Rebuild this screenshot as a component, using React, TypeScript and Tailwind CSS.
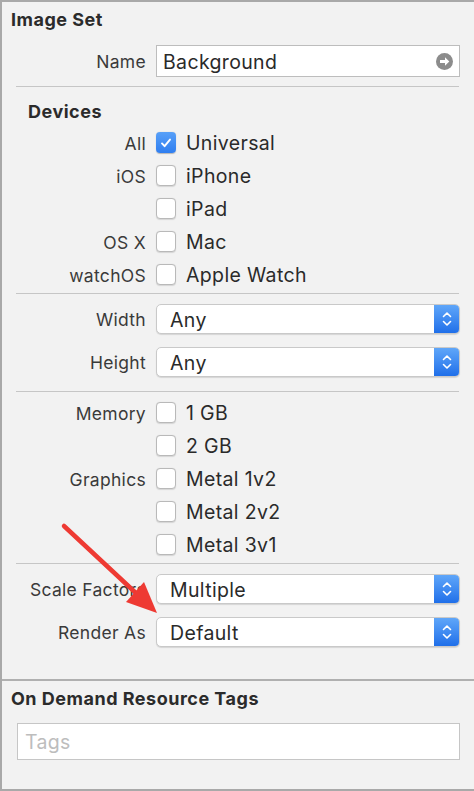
import React from 'react';

const font = "font-['Inter','Liberation_Sans',sans-serif]";

const Label = ({ children }: { children?: React.ReactNode }) => (
  <div className="w-[144px] shrink-0 pt-[3px] text-right text-[17.5px] tracking-[0.3px] text-[#3a3a3a]">{children}</div>
);

const Checkbox = ({ checked }: { checked?: boolean }) =>
  checked ? (
    <div className="flex h-[21px] w-[20px] shrink-0 items-center justify-center rounded-[4px] bg-gradient-to-b from-[#58a0f8] to-[#2f7ef0] shadow-[0_0.5px_1px_rgba(0,0,0,0.25)]">
      <svg className="h-[14px] w-[14px]" viewBox="0 0 14 14" fill="none">
        <path d="M3 7.4l2.6 2.8L11 3.6" stroke="white" strokeWidth={1.9} strokeLinecap="round" strokeLinejoin="round" />
      </svg>
    </div>
  ) : (
    <div className="h-[21px] w-[20px] shrink-0 rounded-[4px] border border-[#b9b9b9] bg-white shadow-[0_0.5px_1px_rgba(0,0,0,0.12)]" />
  );

const CheckRow = ({ label, text, checked }: { label?: string; text: string; checked?: boolean }) => (
  <div className="flex h-[33px] items-center">
    <Label>{label}</Label>
    <div className="ml-[10px] flex items-center gap-[10px]">
      <Checkbox checked={checked} />
      <span className="pt-[3px] text-[19.5px] tracking-[0.35px] text-[#2a2a2a]">{text}</span>
    </div>
  </div>
);

const Select = ({ label, value }: { label: string; value: string }) => (
  <div className="flex h-[30px] items-center">
    <Label>{label}</Label>
    <div className="ml-[10px] flex h-[30px] w-[304px] overflow-hidden rounded-[5px] border border-[#c9c9c9] bg-white shadow-[0_1px_1px_rgba(0,0,0,0.12)]">
      <div className="flex flex-1 items-center pl-[13px] pt-[3px] text-[19.5px] tracking-[0.35px] text-[#2a2a2a]">{value}</div>
      <div className="flex w-[25px] items-center justify-center bg-gradient-to-b from-[#5fa6f9] to-[#1f6fe9]">
        <svg className="h-[18px] w-[12px]" viewBox="0 0 12 18" fill="none">
          <path d="M2.5 6.5L6 3l3.5 3.5M2.5 11.5L6 15l3.5-3.5" stroke="white" strokeWidth={1.6} strokeLinecap="round" strokeLinejoin="round" />
        </svg>
      </div>
    </div>
  </div>
);

const Separator = () => <div className="ml-[14px] mr-[15px] h-px bg-[#c6c6c6]" />;

export default function App() {
  return (
    <div className={`relative h-[791px] w-[474px] overflow-hidden border-l-2 border-t-2 border-b-2 border-[#a9a9a9] bg-[#f2f2f2] ${font}`}>
      <div className="pt-[6px]">
        <div className="h-[22px] pl-[9px] pt-[1px] text-[18px] font-bold leading-[22px] tracking-[0.5px] text-[#2b2b2b]">Image Set</div>

        <div className="mt-[15px] flex h-[32px] items-center">
          <Label>Name</Label>
          <div className="ml-[10px] flex h-[32px] w-[304px] items-center border border-[#bdbdbd] bg-white pl-[6px] pr-[6px]">
            <span className="flex-1 pt-[3px] text-[19.5px] tracking-[0.35px] text-[#2a2a2a]">Background</span>
            <svg className="h-[17px] w-[17px]" viewBox="0 0 17 17">
              <circle cx="8.5" cy="8.5" r="8.5" fill="#8c8c8c" />
              <path d="M4 7h5V4.2l4.3 4.3L9 12.8V10H4z" fill="white" />
            </svg>
          </div>
        </div>

        <div className="mt-[9px]">
          <Separator />
        </div>

        <div className="mt-[13px] h-[22px] pl-[26px] pt-[1px] text-[18px] font-bold leading-[22px] tracking-[0.5px] text-[#2b2b2b]">Devices</div>

        <div className="mt-[4px]">
          <CheckRow label="All" text="Universal" checked />
          <CheckRow label="iOS" text="iPhone" />
          <CheckRow text="iPad" />
          <CheckRow label="OS X" text="Mac" />
          <CheckRow label="watchOS" text="Apple Watch" />
        </div>

        <div className="mt-[2px]">
          <Separator />
        </div>

        <div className="mt-[10px] flex flex-col gap-[13px]">
          <Select label="Width" value="Any" />
          <Select label="Height" value="Any" />
        </div>

        <div className="mt-[14px]">
          <Separator />
        </div>

        <div className="mt-[4px]">
          <CheckRow label="Memory" text="1 GB" />
          <CheckRow text="2 GB" />
          <CheckRow label="Graphics" text="Metal 1v2" />
          <CheckRow text="Metal 2v2" />
          <CheckRow text="Metal 3v1" />
        </div>

        <div className="mt-[2px]">
          <Separator />
        </div>

        <div className="mt-[10px] flex flex-col gap-[13px]">
          <Select label="Scale Factors" value="Multiple" />
          <Select label="Render As" value="Default" />
        </div>

        <div className="mt-[32px] h-[2px] bg-[#b0b0b0]" />

        <div className="mt-[6px] h-[22px] pl-[9px] pt-[1px] text-[18px] font-bold leading-[22px] tracking-[0.5px] text-[#2b2b2b]">On Demand Resource Tags</div>

        <div className="ml-[15px] mr-[14px] mt-[14px] flex h-[37px] items-center border border-[#c6c6c6] bg-white pl-[7px] pt-[3px] text-[19.5px] tracking-[0.35px] text-[#bdbdbd]">
          Tags
        </div>
      </div>

      <svg className="pointer-events-none absolute left-[-2px] top-[-2px]" width="474" height="791" viewBox="0 0 474 791">
        <line x1="64" y1="526" x2="138" y2="595" stroke="#ee3a33" strokeWidth={4.5} strokeLinecap="round" />
        <polygon points="157,613 126,602 144,582" fill="#ee3a33" />
      </svg>
    </div>
  );
}
